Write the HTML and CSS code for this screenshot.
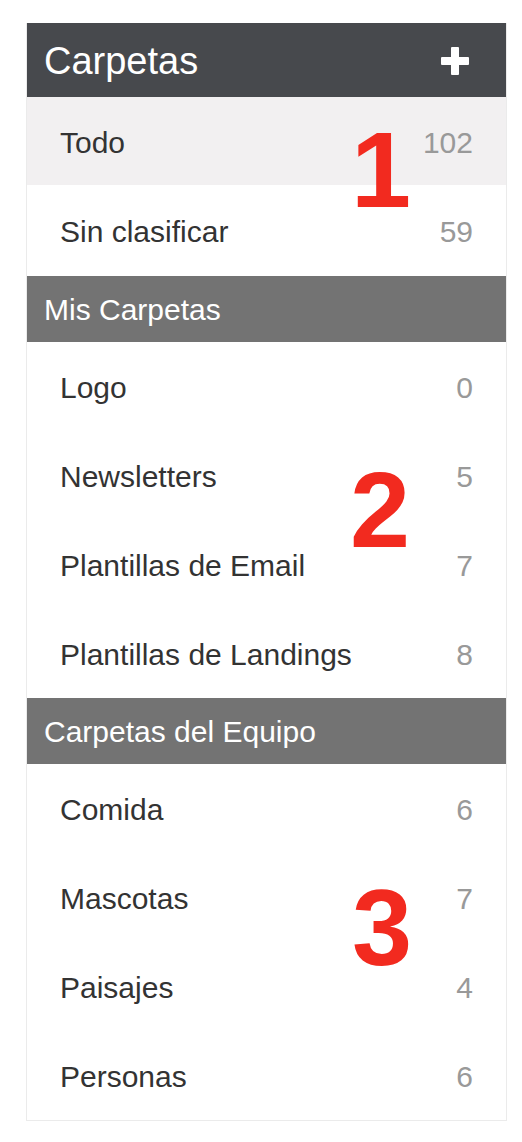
FILE: index.html
```html
<!DOCTYPE html>
<html lang="es">
<head>
    <meta charset="UTF-8">
    <meta name="viewport" content="width=device-width, initial-scale=1.0">
    <title>Carpetas</title>
    <link rel="stylesheet" href="styles.css">
</head>
<body>
    <div class="panel">
        <div class="panel-header">
            <span>Carpetas</span>
            <svg class="add" width="28" height="28" viewBox="0 0 28 28">
                <rect x="10" y="0" width="8" height="28" rx="1" fill="#fff"/>
                <rect x="0" y="10" width="28" height="8" rx="1" fill="#fff"/>
            </svg>
        </div>

        <div class="row active"><span>Todo</span><span class="count">102</span></div>
        <div class="row"><span>Sin clasificar</span><span class="count">59</span></div>

        <div class="section">Mis Carpetas</div>
        <div class="row"><span>Logo</span><span class="count">0</span></div>
        <div class="row"><span>Newsletters</span><span class="count">5</span></div>
        <div class="row"><span>Plantillas de Email</span><span class="count">7</span></div>
        <div class="row"><span>Plantillas de Landings</span><span class="count">8</span></div>

        <div class="section">Carpetas del Equipo</div>
        <div class="row"><span>Comida</span><span class="count">6</span></div>
        <div class="row"><span>Mascotas</span><span class="count">7</span></div>
        <div class="row"><span>Paisajes</span><span class="count">4</span></div>
        <div class="row"><span>Personas</span><span class="count">6</span></div>

        <!-- marcas de anotacion -->
        <span class="mark mark-1">1</span>
        <span class="mark mark-2">2</span>
        <span class="mark mark-3">3</span>
    </div>
</body>
</html>
```

FILE: styles.css
```css
* {
    margin: 0;
    padding: 0;
    box-sizing: border-box;
    font-family: "Liberation Sans", Arial, sans-serif;
}

body {
    background-color: #fff;
    padding: 23px 0 0 26px;
}

.panel {
    position: relative;
    width: 481px;
    border: 1px solid #ebebeb;
    border-top: none;
    background: white;
}

.panel-header {
    height: 74px;
    background-color: #47494d;
    color: white;
    display: flex;
    justify-content: space-between;
    align-items: center;
    padding: 2px 37px 0 17px;
    font-size: 38px;
}

.add {
    display: block;
}

.section {
    height: 66px;
    background-color: #737373;
    color: white;
    display: flex;
    align-items: center;
    padding: 2px 17px 0;
    font-size: 30px;
}

.row {
    height: 89px;
    display: flex;
    justify-content: space-between;
    align-items: center;
    padding: 3px 33px 0;
    font-size: 30px;
    color: #333;
}

.row.active {
    background-color: #f2f0f1;
    height: 88px;
}

.row.active + .row {
    height: 91px;
}

.count {
    color: #999;
}

.mark {
    position: absolute;
    font-size: 108px;
    line-height: 1;
    font-weight: bold;
    color: #f22a1f;
}

.mark-1 {
    top: 93px;
    left: 324px;
}

.mark-2 {
    top: 433px;
    left: 323px;
}

.mark-3 {
    top: 851px;
    left: 325px;
}
```
